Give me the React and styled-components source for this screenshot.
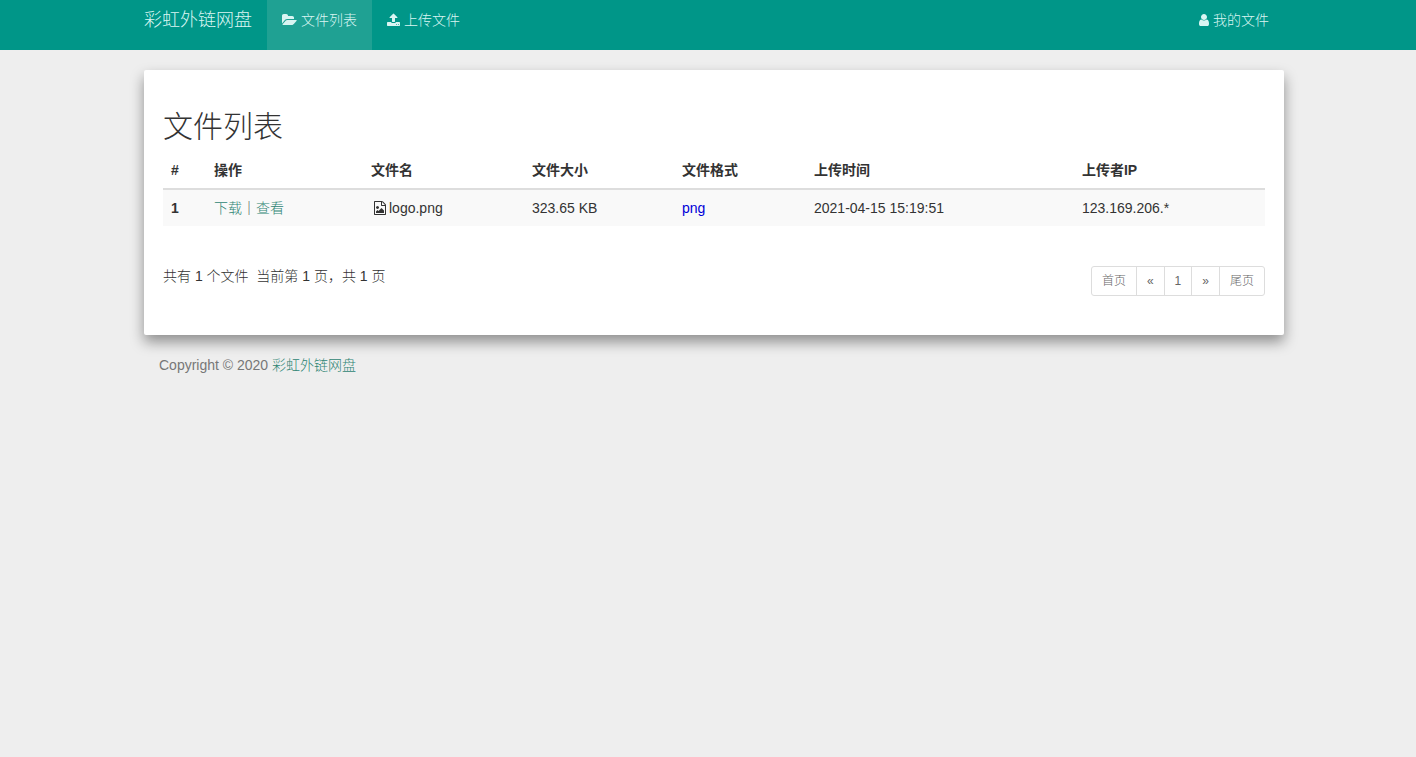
import * as React from "react";
import styled, { createGlobalStyle } from "styled-components";

const files = [
    {
        id: 1,
        name: "logo.png",
        size: "323.65 KB",
        type: "png",
        time: "2021-04-15 15:19:51",
        ip: "123.169.206.*",
    },
];

const columns = [
    { title: "#", width: 43 },
    { title: "操作", width: 157 },
    { title: "文件名", width: 161 },
    { title: "文件大小", width: 150 },
    { title: "文件格式", width: 132 },
    { title: "上传时间", width: 268 },
    { title: "上传者IP", width: 191 },
];

const total = columns.reduce((sum, col) => sum + col.width, 0);

const pages = ["首页", "«", "1", "»", "尾页"];

const icons = {
    folder: {
        width: 1920,
        d: "M1879 952q0 31-31 66l-336 396q-43 51-120.5 86.5t-143.5 35.5h-1088q-34 0-60.5-13t-26.5-43q0-31 31-66l336-396q43-51 120.5-86.5t143.5-35.5h1088q34 0 60.5 13t26.5 43zm-343-344v160h-832q-94 0-197 47.5t-164 119.5l-337 396-5 6q0-4-.5-12.5t-.5-12.5v-960q0-92 66-158t158-66h320q92 0 158 66t66 158v32h544q92 0 158 66t66 158z",
    },
    upload: {
        x: 64,
        width: 1664,
        d: "M1344 1472q0-26-19-45t-45-19-45 19-19 45 19 45 45 19 45-19 19-45zm256 0q0-26-19-45t-45-19-45 19-19 45 19 45 45 19 45-19 19-45zm128-224v320q0 40-28 68t-68 28h-1472q-40 0-68-28t-28-68v-320q0-40 28-68t68-28h427q21 56 70.5 92t110.5 36h256q61 0 110.5-36t70.5-92h427q40 0 68 28t28 68zm-325-648q-17 40-59 40h-256v448q0 26-19 45t-45 19h-256q-26 0-45-19t-19-45v-448h-256q-42 0-59-40-17-39 14-69l448-448q18-19 45-19t45 19l448 448q31 30 14 69z",
    },
    user: {
        x: 256,
        width: 1280,
        d: "M1536 1399q0 109-62.5 187t-150.5 78h-854q-88 0-150.5-78t-62.5-187q0-85 8.5-160.5t31.5-152 58.5-131 94-89 134.5-34.5q131 128 313 128t313-128q76 0 134.5 34.5t94 89 58.5 131 31.5 152 8.5 160.5zm-256-887q0 159-112.5 271.5t-271.5 112.5-271.5-112.5-112.5-271.5 112.5-271.5 271.5-112.5 271.5 112.5 112.5 271.5z",
    },
    image: {
        width: 1792,
        d: "M1596 380q28 28 48 76t20 88v1152q0 40-28 68t-68 28h-1344q-40 0-68-28t-28-68v-1600q0-40 28-68t68-28h896q40 0 88 20t76 48zm-444-244v376h376q-10-29-22-41l-313-313q-12-12-41-22zm384 1528v-1024h-416q-40 0-68-28t-28-68v-416h-768v1536h1280zm-128-448v320h-1024v-192l192-192 128 128 384-384zm-832-192q-80 0-136-56t-56-136 56-136 136-56 136 56 56 136-56 136-136 56z",
    },
};

function Icon({ name }) {
    const icon = icons[name];
    return (
        <IconSvg viewBox={`${icon.x || 0} 0 ${icon.width} 1792`} aria-hidden="true">
            <path d={icon.d} />
        </IconSvg>
    );
}

export default function App() {
    return (
        <>
            <GlobalStyle />
            <Navbar>
                <NavContainer>
                    <Brand href="#">彩虹外链网盘</Brand>
                    <NavLink href="#" $active>
                        <Icon name="folder" />
                        文件列表
                    </NavLink>
                    <NavLink href="#">
                        <Icon name="upload" />
                        上传文件
                    </NavLink>
                    <NavLink href="#" $right>
                        <Icon name="user" />
                        我的文件
                    </NavLink>
                </NavContainer>
            </Navbar>
            <Page>
                <Container>
                    <Well>
                        <Title>文件列表</Title>
                        <Table>
                            <colgroup>
                                {columns.map((col) => (
                                    <col key={col.title} style={{ width: `${(col.width / total) * 100}%` }} />
                                ))}
                            </colgroup>
                            <thead>
                                <tr>
                                    {columns.map((col) => (
                                        <th key={col.title}>{col.title}</th>
                                    ))}
                                </tr>
                            </thead>
                            <tbody>
                                {files.map((file) => (
                                    <tr key={file.id}>
                                        <th scope="row">{file.id}</th>
                                        <td>
                                            <Link href="#">下载</Link>｜<Link href="#">查看</Link>
                                        </td>
                                        <td>
                                            <FileName>
                                                <Icon name="image" />
                                                {file.name}
                                            </FileName>
                                        </td>
                                        <td>{file.size}</td>
                                        <td><FileType>{file.type}</FileType></td>
                                        <td>{file.time}</td>
                                        <td>{file.ip}</td>
                                    </tr>
                                ))}
                            </tbody>
                        </Table>
                        <TableFooter>
                            <Summary>
                                共有 <b>1</b> 个文件&nbsp; 当前第 <b>1</b> 页，共 <b>1</b> 页
                            </Summary>
                            <Pagination>
                                {pages.map((page) => (
                                    <li key={page}>
                                        <PageLink href="#">{page}</PageLink>
                                    </li>
                                ))}
                            </Pagination>
                        </TableFooter>
                    </Well>
                    <Copyright>
                        Copyright © 2020 <Link href="#">彩虹外链网盘</Link>
                    </Copyright>
                </Container>
            </Page>
        </>
    );
}

const GlobalStyle = createGlobalStyle`
      * {
        box-sizing: border-box;
      }

      body {
        margin: 0;
        background-color: #eeeeee;
        color: #333;
        font-family: "Liberation Sans", "Noto Sans CJK SC", sans-serif;
        font-size: 14px;
        font-weight: 300;
        line-height: 20px;
      }

      a {
        text-decoration: none;
      }
    `;

const IconSvg = styled.svg`
      height: 14px;
      flex: none;
      fill: currentColor;
    `;

const Navbar = styled.nav`
      padding-left: 12px;
      background-color: #009688;
    `;

const Page = styled.main`
      padding: 20px 0 0 12px;
    `;

const Container = styled.div`
      max-width: 1140px;
      margin: 0 auto;
    `;

const NavContainer = styled(Container)`
      display: flex;
      height: 50px;
    `;

const Brand = styled.a`
      padding: 10px 15px 10px 0;
      color: #d9f5f2;
      font-size: 18px;
    `;

const NavLink = styled.a`
      display: flex;
      align-items: center;
      gap: 4px;
      padding: 0 15px 10px;
      margin-left: ${(props) => (props.$right ? "auto" : "0")};
      color: #d9f5f2;
      background-color: ${(props) => (props.$active ? "#1fa193" : "transparent")};
    `;

const Well = styled.div`
      padding: 39px 19px;
      background-color: #fff;
      border-radius: 2px;
      box-shadow: 0 7px 14px rgba(0, 0, 0, 0.4);
    `;

const Title = styled.h2`
      margin: 0 0 7px;
      font-size: 30px;
      font-weight: 300;
      line-height: 36px;
    `;

const Table = styled.table`
      width: 100%;
      table-layout: fixed;
      border-collapse: collapse;

      th,
      td {
        padding: 8px;
        text-align: left;
      }

      th {
        font-weight: bold;
      }

      thead th {
        border-bottom: 2px solid #ddd;
      }

      tbody tr {
        background-color: #f9f9f9;
      }
    `;

const Link = styled.a`
      color: #2f8574;
    `;

const FileName = styled.span`
      display: flex;
      align-items: center;
      gap: 2px;
      padding-left: 2px;
    `;

const FileType = styled.span`
      color: #0000d8;
    `;

const TableFooter = styled.div`
      display: flex;
      justify-content: space-between;
      align-items: flex-start;
      padding-top: 40px;
    `;

const Summary = styled.div`
      color: #333;
    `;

const Pagination = styled.ul`
      display: flex;
      margin: 0;
      padding: 0;
      list-style: none;
      border: 1px solid #ddd;
      border-radius: 3px;

      li + li {
        border-left: 1px solid #ddd;
      }
    `;

const PageLink = styled.a`
      display: block;
      padding: 5px 10px;
      color: #666;
      font-size: 12px;
      line-height: 18px;
    `;

const Copyright = styled.footer`
      padding: 20px 15px;
      color: #777;
    `;
